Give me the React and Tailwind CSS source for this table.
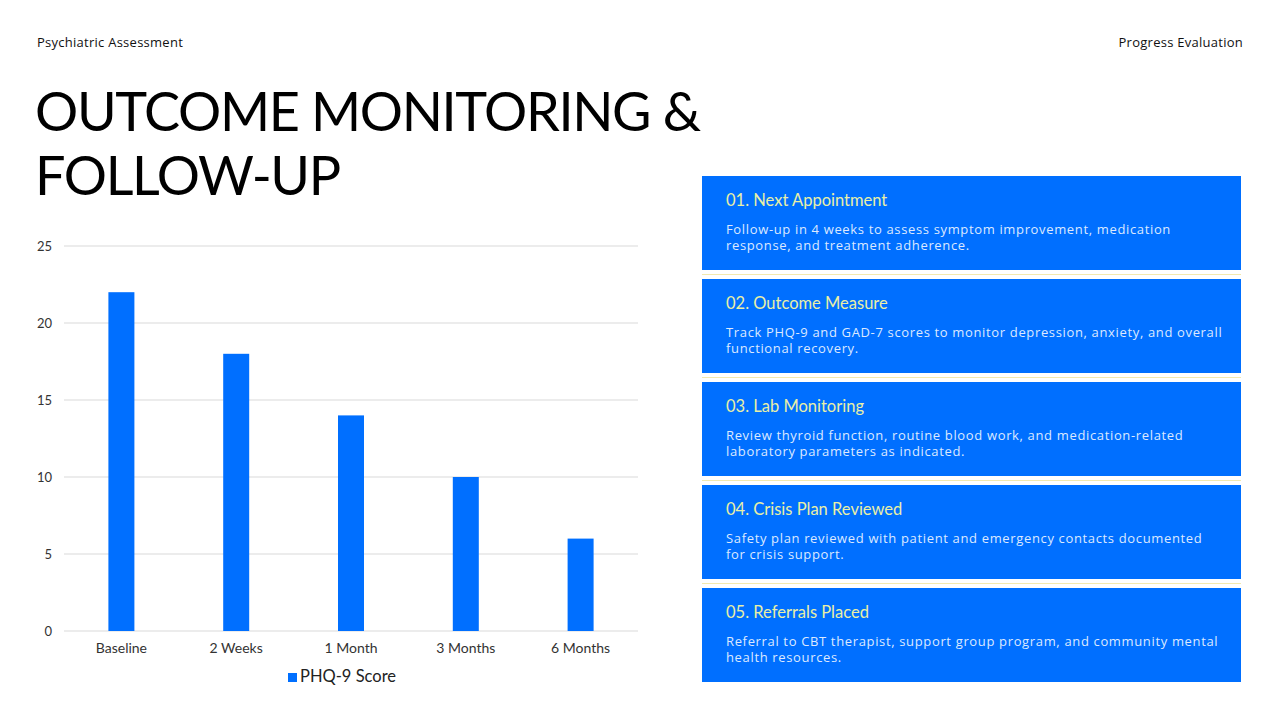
const bars = [
  { label: 'Baseline', value: 22 },
  { label: '2 Weeks', value: 18 },
  { label: '1 Month', value: 14 },
  { label: '3 Months', value: 10 },
  { label: '6 Months', value: 6 },
];

const items = [
  {
    title: '01. Next Appointment',
    text: 'Follow-up in 4 weeks to assess symptom improvement, medication response, and treatment adherence.',
  },
  {
    title: '02. Outcome Measure',
    text: 'Track PHQ-9 and GAD-7 scores to monitor depression, anxiety, and overall functional recovery.',
  },
  {
    title: '03. Lab Monitoring',
    text: 'Review thyroid function, routine blood work, and medication-related laboratory parameters as indicated.',
  },
  {
    title: '04. Crisis Plan Reviewed',
    text: 'Safety plan reviewed with patient and emergency contacts documented for crisis support.',
  },
  {
    title: '05. Referrals Placed',
    text: 'Referral to CBT therapist, support group program, and community mental health resources.',
  },
];

const title = { fontFamily: 'Lato, "Noto Sans", sans-serif' };
const body = { fontFamily: '"Open Sans", "Noto Sans", sans-serif' };

function Chart() {
  // chart space: x 27..601, zero line at y 401, 15.4px per point
  const left = 27;
  const right = 601;
  const zero = 401;
  const step = (right - left) / bars.length;
  const ticks = [0, 5, 10, 15, 20, 25];

  return (
    <svg width="610" height="460" viewBox="0 0 610 460" style={title}>
      {ticks.map((t) => {
        const y = zero - t * 15.4;
        return (
          <g key={t}>
            <line x1={left} x2={right} y1={y} y2={y} stroke="#d9d9d9" strokeWidth="1" />
            <text x="15" y={y + 2} textAnchor="end" dominantBaseline="middle" fontSize="13" fill="#333">
              {t}
            </text>
          </g>
        );
      })}
      {bars.map((b, i) => {
        const cx = left + step * (i + 0.5);
        const h = b.value * 15.4;
        return (
          <g key={b.label}>
            <rect x={cx - 13} y={zero - h} width="26" height={h} fill="#006fff" />
            <text x={cx} y="419" textAnchor="middle" dominantBaseline="middle" fontSize="14" fill="#333">
              {b.label}
            </text>
          </g>
        );
      })}
      <rect x="251" y="443" width="9" height="9" fill="#006fff" />
      <text x="263" y="448" dominantBaseline="middle" fontSize="16.5" fill="#222">
        PHQ-9 Score
      </text>
    </svg>
  );
}

export default function App() {
  return (
    <div className="w-[1280px] h-[720px] bg-white overflow-hidden flex flex-col px-[37px] pt-[33px]">
      {/* Header */}
      <div className="flex justify-between text-[13px] leading-[18px] tracking-[0.02em] text-[#111]" style={body}>
        <span>Psychiatric Assessment</span>
        <span>Progress Evaluation</span>
      </div>

      <div className="flex justify-between">
        {/* Left: title + chart */}
        <div className="w-[610px] shrink-0 flex flex-col">
          <h1
            className="mt-[28px] -ml-[2px] text-[54px] leading-[64px] font-normal text-black whitespace-nowrap tracking-[-0.025em]"
            style={title}
          >
            OUTCOME MONITORING &amp;
            <br />
            FOLLOW-UP
          </h1>
          <div className="mt-[23px]">
            <Chart />
          </div>
        </div>

        {/* Right: cards */}
        <div className="w-[539px] shrink-0 mt-[125px] mr-[2px] flex flex-col">
          {items.map((item, i) => (
            <div key={item.title}>
              <div className="h-[94px] bg-[#006fff] pl-[24px] pr-[17px] pt-[14px]">
                <h3 className="text-[16.5px] leading-[20px] text-[#e9f0a6]" style={title}>
                  {item.title}
                </h3>
                <p className="mt-[11px] text-[13px] leading-[16px] text-[#dce9ff] tracking-[0.05em]" style={body}>
                  {item.text}
                </p>
              </div>
              {i < items.length - 1 && (
                <div className="h-[9px] flex items-center">
                  <div className="h-px w-full bg-[#f3e9ae]" />
                </div>
              )}
            </div>
          ))}
        </div>
      </div>
    </div>
  );
}
